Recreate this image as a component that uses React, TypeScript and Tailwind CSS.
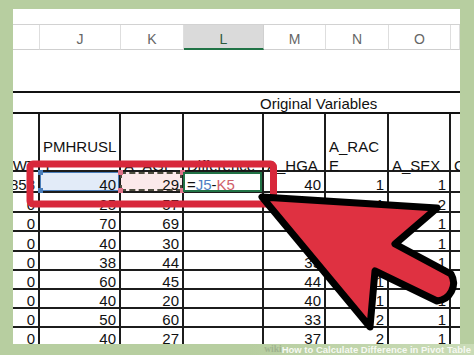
import React from 'react';

const colHeads = ['', 'J', 'K', 'L', 'M', 'N', 'O', ''];

// rows below the selected one: [I, J, K, L, M, N, O, P]
const rows: string[][] = [
  ['0', '25', '57', '', '44', '1', '2', ''],
  ['0', '70', '69', '', '40', '1', '1', ''],
  ['0', '40', '30', '', '38', '1', '1', ''],
  ['0', '38', '44', '', '35', '1', '1', ''],
  ['0', '60', '45', '', '44', '1', '1', ''],
  ['0', '40', '20', '', '40', '1', '1', ''],
  ['0', '50', '60', '', '33', '2', '1', ''],
  ['0', '40', '27', '', '37', '2', '1', ''],
];
const rowH = ['h-[20px]', 'h-[19px]', 'h-[20px]', 'h-[19px]', 'h-[19px]', 'h-[19px]', 'h-[19px]', 'h-[19px]'];

const grid = 'grid grid-cols-[27px_81px_63px_80px_62px_63px_62px_9px]';
const num = 'border-b-2 border-[#1c1c1c] flex items-end justify-end pr-[3px] leading-[12px] whitespace-nowrap';

const Handle = ({ pos, color }: { pos: string; color: string }) => (
  <div className={`absolute w-[5px] h-[5px] ${pos} ${color}`} />
);

export default function App() {
  return (
    <div className="relative w-[474px] h-[355px] bg-[#b7cea0] flex flex-col overflow-hidden font-['Liberation_Sans',Arial,sans-serif] text-[15px] text-[#111]">
      <div className="pt-[9px] pl-[13px] pr-[14px]">
        <div className="bg-white h-[335px] overflow-hidden flex flex-col">
          {/* ribbon strip */}
          <div className="h-[16px] shrink-0 border-b border-[#d2d2d2]" />
          {/* column letters */}
          <div className={`${grid} h-[25px] shrink-0 text-[14px] leading-[14px] text-[#666]`}>
            {colHeads.map((c, i) =>
              c === 'L' ? (
                <div key={i} className="bg-[#dadada] border-b-2 border-[#217346] border-r border-r-[#d0d0d0] flex items-end justify-center pb-[2px] text-[#2c5a3c]">
                  {c}
                </div>
              ) : (
                <div key={i} className="border-b border-[#cfcfcf] border-r border-r-[#dedede] flex items-end justify-center pb-[3px]">
                  {c}
                </div>
              ),
            )}
          </div>
          {/* empty row */}
          <div className="h-[43px] shrink-0 border-b-2 border-[#111]" />
          {/* group title */}
          <div className="h-[21px] shrink-0 border-b-2 border-[#111] flex items-end pl-[247px] leading-[17px]">
            Original Variables
          </div>
          {/* variable names */}
          <div className={`${grid} h-[58px] shrink-0 leading-[19px]`}>
            <div className="border-r-2 border-b-2 border-[#1c1c1c] flex flex-col justify-end items-end pr-[2px]">
              <div className="-mb-[5px]">WT</div>
            </div>
            {[['PMHRUSL', 'T'], ['A_AGE'], ['Difference'], ['A_HGA'], ['A_RAC', 'E'], ['A_SEX']].map((lines, i) => (
              <div key={i} className="border-r-2 border-b-2 border-[#1c1c1c] flex flex-col justify-end pl-[3px] whitespace-nowrap">
                <div className="-mb-[5px]">
                  {lines.map((l) => (
                    <div key={l}>{l}</div>
                  ))}
                </div>
              </div>
            ))}
            <div className="border-b-2 border-[#1c1c1c] flex flex-col justify-end pl-[3px]">
              <div className="-mb-[5px]">G</div>
            </div>
          </div>
          {/* selected row */}
          <div className={`${grid} h-[21px] shrink-0`}>
            <div className={`${num} border-r-2 pr-[1px]`}>858</div>
            <div className={`${num} border-r-2 relative bg-[#e2ebf8]`}>
              <div className="absolute left-0 right-0 top-0 bottom-0 border border-[#4a7ebb]" />
              <Handle pos="-left-[2px] -top-[2px]" color="bg-[#4a7ebb]" />
              <Handle pos="-left-[2px] -bottom-[2px]" color="bg-[#4a7ebb]" />
              <span className="relative">40</span>
            </div>
            <div className={`${num} border-r-2 relative bg-[#fbe9ea]`}>
              <div className="absolute -left-[1px] right-0 top-0 bottom-0 border-2 border-dashed border-[#4d4d3e]" />
              <Handle pos="-left-[3px] -top-[2px]" color="bg-[#e0738a]" />
              <Handle pos="-left-[3px] -bottom-[2px]" color="bg-[#e0738a]" />
              <Handle pos="-right-[3px] -top-[2px]" color="bg-[#e0738a]" />
              <Handle pos="-right-[3px] -bottom-[2px]" color="bg-[#e0738a]" />
              <span className="relative">29</span>
            </div>
            <div className="border-b-2 border-r-2 border-[#1c1c1c] relative flex items-end pl-[3px] leading-[12px]">
              <div className="absolute -left-[1px] right-0 top-0 -bottom-[1px] border-2 border-[#217346]" />
              <span className="relative">
                =<span className="text-[#4f7fc4]">J5</span>-<span className="text-[#d0616a]">K5</span>
              </span>
            </div>
            <div className={`${num} border-r-2`}>40</div>
            <div className={`${num} border-r-2`}>1</div>
            <div className={`${num} border-r-2`}>1</div>
            <div className={num} />
          </div>
          {rows.map((r, ri) => (
            <div key={ri} className={`${grid} ${rowH[ri]} shrink-0`}>
              {r.map((v, ci) => (
                <div key={ci} className={ci < 7 ? `${num} border-r-2` : num}>
                  {v}
                </div>
              ))}
            </div>
          ))}
        </div>
      </div>
      {/* caption strip */}
      <div className="h-[11px] flex justify-end">
        <div className="w-[225px] h-full bg-linear-to-r from-[#b7cea0] to-[#cadcb7] flex items-center justify-end pr-[3px] text-[9.5px] font-bold leading-none text-[#f6f9f2] whitespace-nowrap">
          <span className="text-[#9fb38e] font-['Liberation_Serif',serif]">wiki</span>
          <span>How to Calculate Difference in Pivot Table</span>
        </div>
      </div>
      {/* annotations drawn over the sheet */}
      <svg className="absolute left-0 top-0 pointer-events-none" width="474" height="355" viewBox="0 0 474 355">
        <rect x="30" y="164" width="243.5" height="40" rx="3" fill="none" stroke="#d8283b" strokeWidth="7" />
        <path
          d="M262 197 L437 208 L395 244 L451 274 A18 18 0 0 1 437 301 L375 271 L370 327 Z"
          fill="#df3141"
          stroke="#000"
          strokeWidth="7"
          strokeLinejoin="round"
        />
      </svg>
    </div>
  );
}
